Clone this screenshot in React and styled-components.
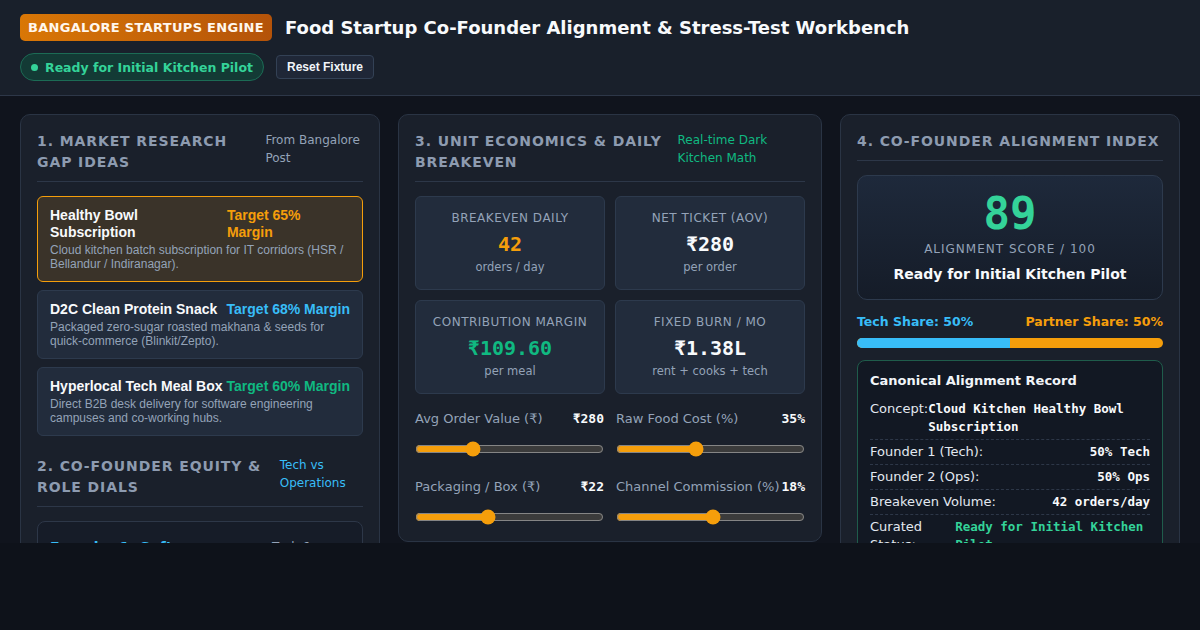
import React, { useState } from 'react';
import styled, { createGlobalStyle, css } from 'styled-components';

const GlobalStyle = createGlobalStyle`
  * { box-sizing: border-box; }
  body {
    margin: 0;
    background: #0e121a;
    color: #e2e8f0;
    font-family: "DejaVu Sans", sans-serif;
  }
`;

const Page = styled.div`
  min-height: 100vh;
  background: #0e121a;
`;

const Header = styled.header`
  background: #19202b;
  border-bottom: 1px solid #2d3748;
  padding: 14px 20px;
  display: flex;
  flex-direction: column;
  gap: 12px;
`;

const TitleRow = styled.div`
  display: flex;
  align-items: center;
  gap: 13px;
`;

const EngineBadge = styled.span`
  display: inline-flex;
  align-items: center;
  height: 27px;
  padding: 0 8px;
  border-radius: 5px;
  background: linear-gradient(90deg, #d97706 0%, #b45309 100%);
  color: #fff7ed;
  font-size: 13px;
  font-weight: 700;
  letter-spacing: 0.3px;
  text-transform: uppercase;
`;

const Title = styled.h1`
  margin: 0;
  font-size: 18px;
  font-weight: 700;
  color: #f8fafc;
`;

const StatusRow = styled.div`
  display: flex;
  align-items: center;
  gap: 12px;
`;

const StatusPill = styled.span`
  display: inline-flex;
  align-items: center;
  gap: 7px;
  height: 28px;
  padding: 0 10px;
  border-radius: 14px;
  border: 1px solid #1c6b55;
  background: #133a35;
  color: #34d399;
  font-size: 12.5px;
  font-weight: 700;
`;

const Dot = styled.span`
  width: 7px;
  height: 7px;
  border-radius: 50%;
  background: #34d399;
`;

const ResetButton = styled.button`
  height: 24px;
  padding: 0 10px;
  border-radius: 4px;
  border: 1px solid #334155;
  background: #1f2737;
  color: #f1f5f9;
  font-family: "Liberation Sans", Arial, sans-serif;
  font-size: 12px;
  font-weight: 700;
  cursor: pointer;
`;

const Main = styled.main`
  height: 447px;
  overflow: hidden;
  background: #10141d;
  padding: 18px 20px 0;
  display: grid;
  grid-template-columns: 360px 1fr 340px;
  gap: 18px;
  align-items: start;
`;

const Panel = styled.section`
  background: #1a202b;
  border: 1px solid #2a3444;
  border-radius: 10px;
  padding: 16px;
`;

const PanelHead = styled.div`
  display: flex;
  justify-content: space-between;
  align-items: flex-start;
  padding-bottom: 8px;
  border-bottom: 1px solid #2d3748;
  margin-bottom: 14px;
  ${p => p.$spaced && css`margin-top: 20px;`}
`;

const Heading = styled.h2`
  margin: 0;
  font-size: 14px;
  line-height: 21px;
  font-weight: 700;
  letter-spacing: 0.9px;
  text-transform: uppercase;
  color: #8d9bb0;
`;

const HeadNote = styled.span`
  font-size: 12px;
  line-height: 18px;
  color: ${p => p.$color || '#94a3b8'};
`;

const IdeaList = styled.div`
  display: flex;
  flex-direction: column;
  gap: 8px;
`;

const IdeaCard = styled.div`
  padding: 10px 12px;
  border-radius: 6px;
  border: 1px solid ${p => (p.$active ? '#f59e0b' : '#2d3a4d')};
  background: ${p => (p.$active ? '#3a3329' : '#222c3c')};
  font-family: "Liberation Sans", Arial, sans-serif;
  cursor: pointer;
`;

const IdeaTop = styled.div`
  display: flex;
  justify-content: space-between;
  font-size: 14px;
  line-height: 17px;
  font-weight: 700;
`;

const IdeaName = styled.span`
  color: #f8fafc;
`;

const IdeaTarget = styled.span`
  color: ${p => p.$color};
`;

const IdeaDesc = styled.p`
  margin: 2px 0 0;
  font-size: 12px;
  line-height: 14px;
  color: #94a3b8;
`;

const FounderCard = styled.div`
  background: #161c28;
  border: 1px solid #2d3748;
  border-radius: 8px;
  padding: 16px 12px;
`;

const FounderTop = styled.div`
  display: flex;
  justify-content: space-between;
  gap: 14px;
`;

const FounderName = styled.span`
  color: #38bdf8;
  font-size: 14px;
  font-weight: 700;
  line-height: 18px;
`;

const MetricGrid = styled.div`
  display: grid;
  grid-template-columns: 1fr 1fr;
  gap: 10px;
`;

const MetricBox = styled.div`
  background: #222c3c;
  border: 1px solid #2d3a4d;
  border-radius: 6px;
  padding: 14px 10px;
  text-align: center;
`;

const MetricLabel = styled.div`
  font-size: 12px;
  line-height: 15px;
  letter-spacing: 0.5px;
  text-transform: uppercase;
  color: #94a3b8;
`;

const MetricValue = styled.div`
  margin-top: 6px;
  font-family: "DejaVu Sans Mono", monospace;
  font-size: 20px;
  line-height: 24px;
  font-weight: 700;
  color: ${p => p.$color || '#f8fafc'};
`;

const MetricSub = styled.div`
  margin-top: 4px;
  font-size: 11.5px;
  line-height: 15px;
  color: #94a3b8;
`;

const SliderGrid = styled.div`
  margin-top: 16px;
  display: grid;
  grid-template-columns: 1fr 1fr;
  column-gap: 12px;
  row-gap: 21px;
`;

const SliderField = styled.label`
  display: flex;
  flex-direction: column;
  gap: 13px;
`;

const SliderHead = styled.div`
  display: flex;
  justify-content: space-between;
  align-items: center;
  font-size: 13px;
  line-height: 18px;
`;

const SliderName = styled.span`
  color: #94a3b8;
`;

const SliderValue = styled.span`
  font-family: "DejaVu Sans Mono", monospace;
  font-weight: 700;
  color: #f8fafc;
`;

const Range = styled.input`
  width: 100%;
  margin: 0;
  accent-color: #f59e0b;
  color-scheme: dark;
`;

const ScoreCard = styled.div`
  border: 1px solid #2d3a4d;
  border-radius: 10px;
  background: linear-gradient(180deg, #1e293b 0%, #151c28 100%);
  padding: 16px 12px;
  text-align: center;
`;

const ScoreValue = styled.div`
  font-family: "DejaVu Sans Mono", monospace;
  font-size: 44px;
  line-height: 44px;
  font-weight: 700;
  color: #34d399;
`;

const ScoreLabel = styled.div`
  margin-top: 5px;
  font-size: 12px;
  line-height: 16px;
  letter-spacing: 1px;
  color: #94a3b8;
`;

const ScoreStatus = styled.div`
  margin-top: 8px;
  font-size: 14px;
  line-height: 18px;
  font-weight: 700;
  color: #f8fafc;
`;

const ShareRow = styled.div`
  margin-top: 14px;
  display: flex;
  justify-content: space-between;
  font-size: 12.5px;
  line-height: 16px;
  font-weight: 700;
`;

const ShareText = styled.span`
  color: ${p => p.$color};
`;

const ShareBar = styled.div`
  margin-top: 8px;
  height: 10px;
  border-radius: 5px;
  overflow: hidden;
  display: flex;
  background: #f59e0b;
`;

const ShareFill = styled.div`
  background: #38bdf8;
`;

const Record = styled.div`
  margin-top: 12px;
  border: 1px solid #1f5c4b;
  border-radius: 8px;
  background: #121823;
  padding: 12px;
`;

const RecordTitle = styled.div`
  font-size: 13px;
  line-height: 16px;
  font-weight: 700;
  color: #f1f5f9;
  margin-bottom: 8px;
`;

const RecordRow = styled.div`
  display: flex;
  justify-content: space-between;
  padding: 3px 0;
  font-size: 13px;
  line-height: 18px;
  & + & { border-top: 1px dashed #2d3748; }
`;

const RecordKey = styled.span`
  color: #e2e8f0;
`;

const RecordVal = styled.span`
  font-family: "DejaVu Sans Mono", monospace;
  font-size: 12.5px;
  font-weight: 700;
  color: ${p => p.$color || '#f8fafc'};
`;

const ideas = [
  {
    id: 'bowl',
    name: 'Healthy Bowl Subscription',
    target: 'Target 65% Margin',
    color: '#f59e0b',
    desc: 'Cloud kitchen batch subscription for IT corridors (HSR / Bellandur / Indiranagar).',
  },
  {
    id: 'snack',
    name: 'D2C Clean Protein Snack',
    target: 'Target 68% Margin',
    color: '#38bdf8',
    desc: 'Packaged zero-sugar roasted makhana & seeds for quick-commerce (Blinkit/Zepto).',
  },
  {
    id: 'meal',
    name: 'Hyperlocal Tech Meal Box',
    target: 'Target 60% Margin',
    color: '#10b981',
    desc: 'Direct B2B desk delivery for software engineering campuses and co-working hubs.',
  },
];

const sliders = [
  { key: 'aov', label: 'Avg Order Value (₹)', min: 150, max: 600, fmt: v => `₹${v}` },
  { key: 'food', label: 'Raw Food Cost (%)', min: 10, max: 70, fmt: v => `${v}%` },
  { key: 'pack', label: 'Packaging / Box (₹)', min: 5, max: 50, fmt: v => `₹${v}` },
  { key: 'comm', label: 'Channel Commission (%)', min: 0, max: 35, fmt: v => `${v}%` },
];

const initial = { aov: 280, food: 35, pack: 22, comm: 18 };

export default function App() {
  const [selected, setSelected] = useState('bowl');
  const [values, setValues] = useState(initial);
  const techShare = 50;

  return (
    <Page>
      <GlobalStyle />
      <Header>
        <TitleRow>
          <EngineBadge>Bangalore Startups Engine</EngineBadge>
          <Title>Food Startup Co-Founder Alignment &amp; Stress-Test Workbench</Title>
        </TitleRow>
        <StatusRow>
          <StatusPill><Dot />Ready for Initial Kitchen Pilot</StatusPill>
          <ResetButton onClick={() => { setValues(initial); setSelected('bowl'); }}>Reset Fixture</ResetButton>
        </StatusRow>
      </Header>

      <Main>
        <Panel>
          <PanelHead>
            <Heading>1. Market Research Gap Ideas</Heading>
            <HeadNote>From Bangalore Post</HeadNote>
          </PanelHead>
          <IdeaList>
            {ideas.map(idea => (
              <IdeaCard key={idea.id} $active={selected === idea.id} onClick={() => setSelected(idea.id)}>
                <IdeaTop>
                  <IdeaName>{idea.name}</IdeaName>
                  <IdeaTarget $color={idea.color}>{idea.target}</IdeaTarget>
                </IdeaTop>
                <IdeaDesc>{idea.desc}</IdeaDesc>
              </IdeaCard>
            ))}
          </IdeaList>

          <PanelHead $spaced>
            <Heading>2. Co-Founder Equity &amp; Role Dials</Heading>
            <HeadNote $color="#38bdf8">Tech vs Operations</HeadNote>
          </PanelHead>
          <FounderCard>
            <FounderTop>
              <FounderName>Founder 1: Software Architect</FounderName>
              <HeadNote>Tech &amp; Product</HeadNote>
            </FounderTop>
          </FounderCard>
        </Panel>

        <Panel>
          <PanelHead>
            <Heading>3. Unit Economics &amp; Daily Breakeven</Heading>
            <HeadNote $color="#10b981">Real-time Dark Kitchen Math</HeadNote>
          </PanelHead>
          <MetricGrid>
            <MetricBox>
              <MetricLabel>Breakeven Daily</MetricLabel>
              <MetricValue $color="#f59e0b">42</MetricValue>
              <MetricSub>orders / day</MetricSub>
            </MetricBox>
            <MetricBox>
              <MetricLabel>Net Ticket (AOV)</MetricLabel>
              <MetricValue>₹280</MetricValue>
              <MetricSub>per order</MetricSub>
            </MetricBox>
            <MetricBox>
              <MetricLabel>Contribution Margin</MetricLabel>
              <MetricValue $color="#10b981">₹109.60</MetricValue>
              <MetricSub>per meal</MetricSub>
            </MetricBox>
            <MetricBox>
              <MetricLabel>Fixed Burn / Mo</MetricLabel>
              <MetricValue>₹1.38L</MetricValue>
              <MetricSub>rent + cooks + tech</MetricSub>
            </MetricBox>
          </MetricGrid>
          <SliderGrid>
            {sliders.map(s => (
              <SliderField key={s.key}>
                <SliderHead>
                  <SliderName>{s.label}</SliderName>
                  <SliderValue>{s.fmt(values[s.key])}</SliderValue>
                </SliderHead>
                <Range
                  type="range"
                  min={s.min}
                  max={s.max}
                  value={values[s.key]}
                  onChange={e => setValues({ ...values, [s.key]: Number(e.target.value) })}
                />
              </SliderField>
            ))}
          </SliderGrid>
        </Panel>

        <Panel>
          <PanelHead>
            <Heading>4. Co-Founder Alignment Index</Heading>
          </PanelHead>
          <ScoreCard>
            <ScoreValue>89</ScoreValue>
            <ScoreLabel>ALIGNMENT SCORE / 100</ScoreLabel>
            <ScoreStatus>Ready for Initial Kitchen Pilot</ScoreStatus>
          </ScoreCard>
          <ShareRow>
            <ShareText $color="#38bdf8">Tech Share: {techShare}%</ShareText>
            <ShareText $color="#f59e0b">Partner Share: {100 - techShare}%</ShareText>
          </ShareRow>
          <ShareBar>
            <ShareFill style={{ width: `${techShare}%` }} />
          </ShareBar>
          <Record>
            <RecordTitle>Canonical Alignment Record</RecordTitle>
            <RecordRow>
              <RecordKey>Concept:</RecordKey>
              <RecordVal>Cloud Kitchen Healthy Bowl Subscription</RecordVal>
            </RecordRow>
            <RecordRow>
              <RecordKey>Founder 1 (Tech):</RecordKey>
              <RecordVal>50% Tech</RecordVal>
            </RecordRow>
            <RecordRow>
              <RecordKey>Founder 2 (Ops):</RecordKey>
              <RecordVal>50% Ops</RecordVal>
            </RecordRow>
            <RecordRow>
              <RecordKey>Breakeven Volume:</RecordKey>
              <RecordVal>42 orders/day</RecordVal>
            </RecordRow>
            <RecordRow>
              <RecordKey>Curated Status:</RecordKey>
              <RecordVal $color="#34d399">Ready for Initial Kitchen Pilot</RecordVal>
            </RecordRow>
          </Record>
        </Panel>
      </Main>
    </Page>
  );
}
